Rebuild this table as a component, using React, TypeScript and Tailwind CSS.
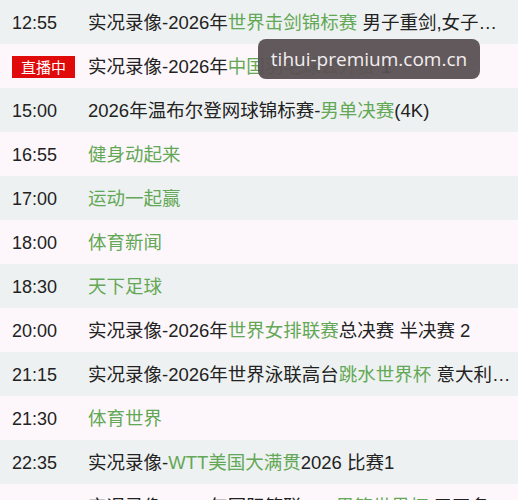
import React from 'react';

type Part = { t: string; g?: boolean };

interface Row {
    time: string;
    live?: boolean;
    parts: Part[];
}

const rows: Row[] = [
    { time: '12:55', parts: [{ t: '实况录像-2026年' }, { t: '世界击剑锦标赛', g: true }, { t: ' 男子重剑,女子…' }] },
    { time: '', live: true, parts: [{ t: '实况录像-2026年' }, { t: '中国羽毛球公开赛', g: true }, { t: ' 1' }] },
    { time: '15:00', parts: [{ t: '2026年温布尔登网球锦标赛-' }, { t: '男单决赛', g: true }, { t: '(4K)' }] },
    { time: '16:55', parts: [{ t: '健身动起来', g: true }] },
    { time: '17:00', parts: [{ t: '运动一起赢', g: true }] },
    { time: '18:00', parts: [{ t: '体育新闻', g: true }] },
    { time: '18:30', parts: [{ t: '天下足球', g: true }] },
    { time: '20:00', parts: [{ t: '实况录像-2026年' }, { t: '世界女排联赛', g: true }, { t: '总决赛 半决赛 2' }] },
    { time: '21:15', parts: [{ t: '实况录像-2026年世界泳联高台' }, { t: '跳水世界杯', g: true }, { t: ' 意大利…' }] },
    { time: '21:30', parts: [{ t: '体育世界', g: true }] },
    { time: '22:35', parts: [{ t: '实况录像-' }, { t: 'WTT美国大满贯', g: true }, { t: '2026 比赛1' }] },
    { time: '23:30', parts: [{ t: '实况录像-2026年国际篮联U17' }, { t: '男篮世界杯', g: true }, { t: ' 三四名…' }] },
];

export default function App() {
    return (
        <div className="relative w-[518px] h-[500px] overflow-hidden bg-[#fdf7fb] font-['Liberation_Sans','Noto_Sans_CJK_SC',sans-serif] text-[18px] text-[#222]">
            {rows.map((r, i) => (
                <div
                    key={i}
                    className={`flex items-center h-[44px] pt-[2px] pl-3 pr-[2px] ${i % 2 === 0 ? 'bg-[#eef1f1]' : 'bg-[#fdf7fb]'}`}
                >
                    <div className="w-[76px] shrink-0">
                        {r.live ? (
                            <span className="inline-flex items-center justify-center w-[63px] h-[22px] bg-[#e00a0a] text-white text-[15px] leading-none">
                                直播中
                            </span>
                        ) : (
                            r.time
                        )}
                    </div>
                    <div className="flex-1 min-w-0 truncate text-[18.5px]">
                        {r.parts.map((p, j) => (
                            <span key={j} className={p.g ? 'text-[#63a856]' : ''}>
                                {p.t}
                            </span>
                        ))}
                    </div>
                </div>
            ))}

            {/* watermark */}
            <div className="absolute left-[258px] top-[39px] w-[222px] h-[40px] rounded-lg bg-[#5a5053]/95 flex items-center justify-center text-[#f2eef0] text-[19px] font-['Open_Sans',sans-serif]">
                tihui-premium.com.cn
            </div>
        </div>
    );
}
